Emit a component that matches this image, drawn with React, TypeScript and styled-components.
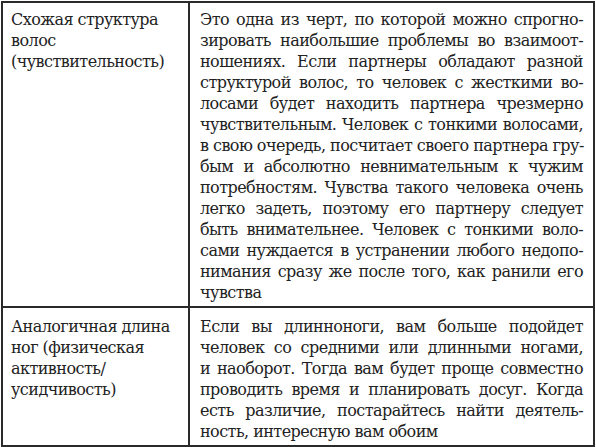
import styled, { createGlobalStyle } from "styled-components";

const GlobalStyle = createGlobalStyle`
  html, body {
    margin: 0;
    padding: 0;
    background: #fff;
  }
  body {
    font-family: "DejaVu Serif", "Liberation Serif", serif;
    color: #222;
  }
`;

type RowData = {
  title: string[];
  text: string[];
};

const rows: RowData[] = [
  {
    title: ["Схожая структура", "волос", "(чувствительность)"],
    text: [
      "Это одна из черт, по которой можно спрогно-",
      "зировать наибольшие проблемы во взаимоот-",
      "ношениях. Если партнеры обладают разной",
      "структурой волос, то человек с жесткими во-",
      "лосами будет находить партнера чрезмерно",
      "чувствительным. Человек с тонкими волосами,",
      "в свою очередь, посчитает своего партнера гру-",
      "бым и абсолютно невнимательным к чужим",
      "потребностям. Чувства такого человека очень",
      "легко задеть, поэтому его партнеру следует",
      "быть внимательнее. Человек с тонкими воло-",
      "сами нуждается в устранении любого недопо-",
      "нимания сразу же после того, как ранили его",
      "чувства",
    ],
  },
  {
    title: ["Аналогичная длина", "ног (физическая", "активность/", "усидчивость)"],
    text: [
      "Если вы длинноноги, вам больше подойдет",
      "человек со средними или длинными ногами,",
      "и наоборот. Тогда вам будет проще совместно",
      "проводить время и планировать досуг. Когда",
      "есть различие, постарайтесь найти деятель-",
      "ность, интересную вам обоим",
    ],
  },
];

const Table = styled.div`
  box-sizing: border-box;
  width: 594px;
  margin: 1px 0 0 1px;
  border: 2px solid #2a2a2a;
`;

const Row = styled.div<{ $first?: boolean }>`
  display: grid;
  grid-template-columns: 187px 1fr;
  border-top: ${(p) => (p.$first ? "none" : "2px solid #2a2a2a")};
`;

const Cell = styled.div<{ $side: "left" | "right"; $first?: boolean }>`
  box-sizing: border-box;
  padding: ${(p) => (p.$first ? "6px" : "8px")} 10px 3px
    ${(p) => (p.$side === "left" ? "8px" : "10px")};
  border-right: ${(p) => (p.$side === "left" ? "2px solid #2a2a2a" : "none")};
  min-width: 0;
`;

const Line = styled.div<{ $justify?: boolean }>`
  font-size: 16px;
  line-height: 21px;
  letter-spacing: -0.55px;
  white-space: nowrap;
  text-align: ${(p) => (p.$justify ? "justify" : "left")};
  text-align-last: ${(p) => (p.$justify ? "justify" : "left")};
`;

export default function App() {
  return (
    <>
      <GlobalStyle />
      <Table>
        {rows.map((row, i) => (
          <Row key={i} $first={i === 0}>
            <Cell $side="left" $first={i === 0}>
              {row.title.map((t, j) => (
                <Line key={j}>{t}</Line>
              ))}
            </Cell>
            <Cell $side="right" $first={i === 0}>
              {row.text.map((t, j) => (
                <Line key={j} $justify={j < row.text.length - 1}>
                  {t}
                </Line>
              ))}
            </Cell>
          </Row>
        ))}
      </Table>
    </>
  );
}
